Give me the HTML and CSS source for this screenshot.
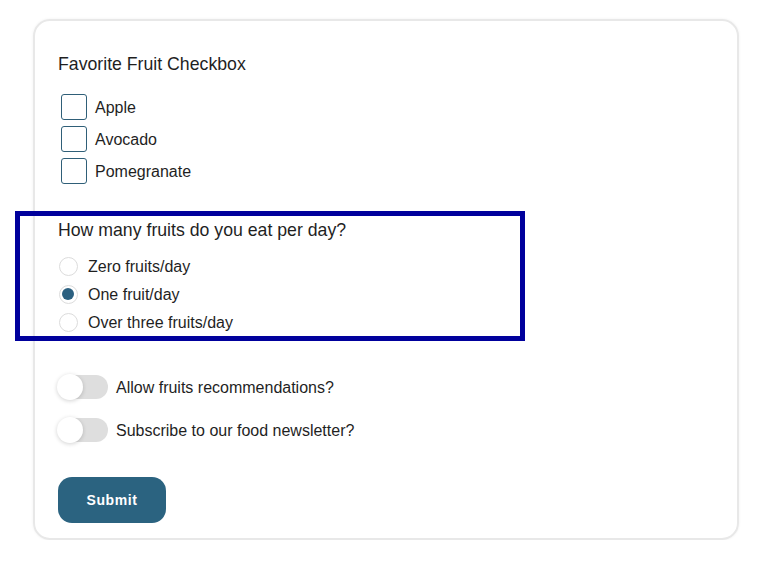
FILE: index.html
```html
<!DOCTYPE html>
<html>
<head>
<meta charset="utf-8">
<link rel="stylesheet" href="styles.css">
</head>
<body>
<form class="card">
  <div class="title">Favorite Fruit Checkbox</div>
  <div class="checks">
    <label class="check-row"><span class="box"></span><span>Apple</span></label>
    <label class="check-row"><span class="box"></span><span>Avocado</span></label>
    <label class="check-row"><span class="box"></span><span>Pomegranate</span></label>
  </div>
  <div class="group">
    <div class="title">How many fruits do you eat per day?</div>
    <div class="radios">
      <label class="radio-row"><span class="radio"></span><span>Zero fruits/day</span></label>
      <label class="radio-row"><span class="radio checked"></span><span>One fruit/day</span></label>
      <label class="radio-row"><span class="radio"></span><span>Over three fruits/day</span></label>
    </div>
  </div>
  <div class="toggles">
    <label class="toggle-row"><span class="track"><span class="thumb"></span></span><span>Allow fruits recommendations?</span></label>
    <label class="toggle-row second"><span class="track"><span class="thumb"></span></span><span>Subscribe to our food newsletter?</span></label>
  </div>
  <button type="button" class="submit">Submit</button>
</form>
</body>
</html>
```

FILE: styles.css
```css
*, *::before, *::after { box-sizing: border-box; }
html, body { margin: 0; padding: 0; background: #fff; }
body {
  font-family: "Liberation Sans", Arial, sans-serif;
  color: #1f1f1f;
  padding: 19px 0 0 33px;
}
.card {
  width: 706px;
  height: 521px;
  border: 2px solid #e8e8e8;
  border-radius: 17px;
  box-shadow: 0 0 3px rgba(0,0,0,0.06);
  padding: 32px 23px 0 23px;
  display: flex;
  flex-direction: column;
}
.title {
  font-size: 17.7px;
  line-height: 22px;
  height: 22px;
}
.checks {
  margin-top: 16px;
  display: flex;
  flex-direction: column;
}
.check-row {
  height: 32px;
  display: flex;
  align-items: center;
  font-size: 16px;
}
.check-row span:last-child { position: relative; top: 1px; }
.box {
  width: 26px;
  height: 26px;
  margin-left: 3px;
  margin-right: 8px;
  border: 1.5px solid #2f5f78;
  border-radius: 3px;
  background: #fff;
}
.group {
  position: relative;
  margin-top: 32px;
}
.group::before {
  content: "";
  position: absolute;
  left: -43px;
  top: -8px;
  width: 510px;
  height: 130px;
  border: 5px solid #00009c;
  pointer-events: none;
}
.radios {
  margin-top: 11px;
  display: flex;
  flex-direction: column;
}
.radio-row {
  height: 28px;
  display: flex;
  align-items: center;
  font-size: 16px;
}
.radio-row span:last-child { position: relative; top: 1px; }
.radio {
  width: 19px;
  height: 19px;
  margin-left: 1px;
  margin-right: 10px;
  border: 1.5px solid #dcdcdc;
  border-radius: 50%;
  background: #fff;
  position: relative;
}
.radio.checked::after {
  content: "";
  position: absolute;
  left: 2px;
  top: 2px;
  width: 12px;
  height: 12px;
  border-radius: 50%;
  background: #2b6080;
}
.toggles {
  margin-top: 36px;
  display: flex;
  flex-direction: column;
}
.toggle-row {
  height: 30px;
  display: flex;
  align-items: center;
  font-size: 16px;
}
.toggle-row > span:last-child { position: relative; top: 1px; }
.toggle-row.second { margin-top: 13px; }
.track {
  position: relative;
  width: 50px;
  height: 24px;
  border-radius: 12px;
  background: #dedede;
  margin-right: 8px;
}
.thumb {
  position: absolute;
  left: -1px;
  top: -1px;
  width: 26px;
  height: 26px;
  border-radius: 50%;
  background: #fff;
  box-shadow: 0 1px 4px rgba(0,0,0,0.18);
}
.submit {
  margin-top: 32px;
  width: 108px;
  height: 46px;
  border: none;
  border-radius: 14px;
  background: #2b6380;
  color: #fff;
  font-family: "Liberation Sans", Arial, sans-serif;
  font-size: 14px;
  font-weight: bold;
  letter-spacing: 0.6px;
  padding: 0;
}
```
